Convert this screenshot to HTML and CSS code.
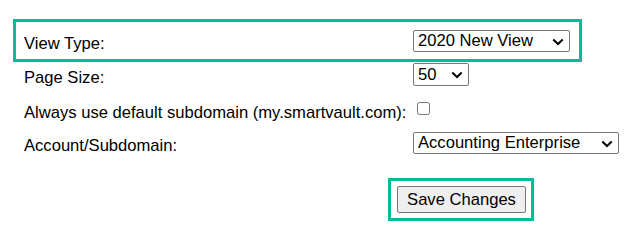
FILE: index.html
```html
<!DOCTYPE html>
<html lang="en">
<head>
<meta charset="utf-8">
<title>Settings</title>
<link rel="stylesheet" href="styles.css">
</head>
<body>
<form class="settings">
  <div class="row row-hl">
    <label class="label" for="viewType">View Type:</label>
    <span class="sel-wrap">
      <select id="viewType" class="sel sel-view">
        <option selected>2020 New View</option>
        <option>Classic View</option>
      </select>
      <svg class="chev" width="12" height="8" viewBox="0 0 12 8" aria-hidden="true"><path d="M1.3 1.5 L6 6 L10.7 1.5" fill="none" stroke="#000" stroke-width="2"/></svg>
    </span>
  </div>
  <div class="row row-page">
    <label class="label label-page" for="pageSize">Page Size:</label>
    <span class="sel-wrap">
      <select id="pageSize" class="sel sel-page">
        <option>25</option>
        <option selected>50</option>
        <option>100</option>
      </select>
      <svg class="chev" width="12" height="8" viewBox="0 0 12 8" aria-hidden="true"><path d="M1.3 1.5 L6 6 L10.7 1.5" fill="none" stroke="#000" stroke-width="2"/></svg>
    </span>
  </div>
  <div class="row row-check">
    <label class="label" for="defaultSub">Always use default subdomain (my.smartvault.com):</label>
    <input type="checkbox" id="defaultSub" class="check">
  </div>
  <div class="row row-account">
    <label class="label" for="account">Account/Subdomain:</label>
    <span class="sel-wrap">
      <select id="account" class="sel sel-account">
        <option selected>Accounting Enterprise</option>
      </select>
      <svg class="chev chev-account" width="12" height="8" viewBox="0 0 12 8" aria-hidden="true"><path d="M1.3 1.5 L6 6 L10.7 1.5" fill="none" stroke="#000" stroke-width="2"/></svg>
    </span>
  </div>
  <div class="save-hl">
    <button type="button" class="save">Save Changes</button>
  </div>
</form>
</body>
</html>
```

FILE: styles.css
```css
html, body {
  margin: 0;
  padding: 0;
  background: #ffffff;
}

body {
  font-family: "Liberation Sans", Arial, sans-serif;
  font-size: 16.6px;
  color: #000000;
}

.settings {
  display: flex;
  flex-direction: column;
  align-items: flex-start;
  padding-top: 19px;
}

.row {
  display: flex;
  align-items: flex-start;
  padding-left: 24px;
}

.label {
  width: 389px;
  flex: none;
  padding-top: 5px;
  line-height: 18px;
  white-space: nowrap;
}

.row-hl {
  box-sizing: border-box;
  margin-left: 13px;
  width: 569px;
  height: 43px;
  border: 3px solid #00be98;
  padding: 8px 0 0 8px;
}

.row-page {
  margin-top: 1px;
}

.label-page {
  padding-top: 6px;
}

.row-check {
  margin-top: 12px;
}

.row-account {
  margin-top: 10px;
}

.sel-wrap {
  position: relative;
  display: block;
  line-height: 0;
}

.sel {
  box-sizing: border-box;
  -webkit-appearance: none;
  appearance: none;
  height: 22px;
  font-family: "Liberation Sans", Arial, sans-serif;
  font-size: 16.6px;
  line-height: 18px;
  color: #000000;
  background-color: #ffffff;
  border: 1px solid #767676;
  border-radius: 2px;
  margin: 0;
  padding: 0 20px 0 4px;
}

.chev {
  position: absolute;
  right: 6px;
  top: 8px;
  pointer-events: none;
}

.sel-view {
  width: 157px;
}

.sel-page {
  width: 56px;
  height: 23px;
}

.sel-account {
  width: 206px;
}

.check {
  width: 13px;
  height: 13px;
  margin: 3px 3px 3px 4px;
}

.save-hl {
  box-sizing: border-box;
  margin-top: 23px;
  margin-left: 388px;
  width: 146px;
  height: 43px;
  border: 3px solid #00be98;
  padding: 5px 0 0 6px;
}

.save {
  box-sizing: border-box;
  width: 129px;
  height: 27px;
  margin: 0;
  padding: 0 6px;
  font-family: "Liberation Sans", Arial, sans-serif;
  font-size: 16.6px;
  color: #000000;
  background: #efefef;
  border: 1px solid #767676;
  border-radius: 2px;
}
```
